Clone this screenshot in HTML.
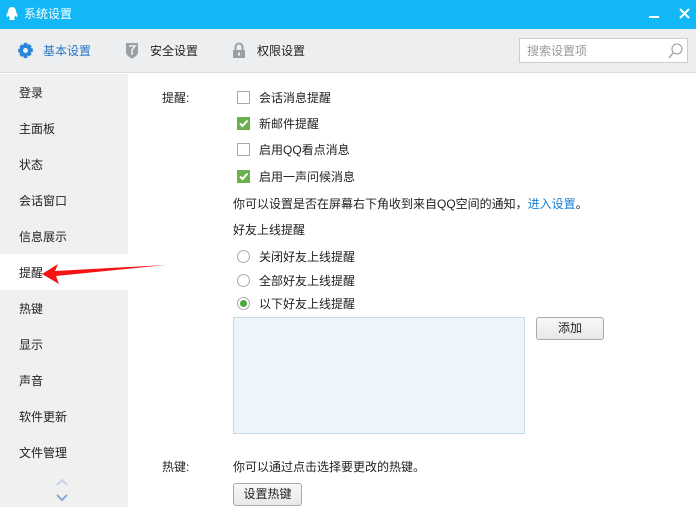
<!DOCTYPE html>
<html><head><meta charset="utf-8"><style>
*{margin:0;padding:0;box-sizing:border-box}
body{width:696px;height:507px;overflow:hidden;font:12px "Liberation Sans","Noto Sans CJK SC",sans-serif;color:#222;background:#fff;position:relative}
.a{position:absolute;white-space:nowrap;line-height:14px}
.cb{position:absolute;width:13px;height:13px;border:1px solid #aaa;background:#fff}
.cb.on{background:#6ab04c;border-color:#6ab04c}
.rd{position:absolute;width:13px;height:13px;border:1px solid #aaa;border-radius:50%;background:#fff}
.btn{position:absolute;border:1px solid #aaa;border-radius:3px;background:linear-gradient(#f8f8f8,#e8e8e8);text-align:center;line-height:20px}
</style></head><body>
<div style="position:absolute;left:0;top:0;width:696px;height:29px;background:#12b7f5"></div>
<svg class="a" style="left:5px;top:6px" width="14" height="16" viewBox="0 0 14 16"><path d="M7 1C4 1 3 3.5 3 6 1.5 8 1 10 2 11c.5 0 1-1 1.5-1.5.3 1 1 2 1.8 2.5C4 12.5 3.5 13.5 5 14h4c1.5-.5 1-1.5-.3-2 .8-.5 1.5-1.5 1.8-2.5.5.5 1 1.5 1.5 1.5 1-1 .5-3-1-5 0-2.5-1-5-4-5z" fill="#fff"/></svg>
<div class="a" style="left:24px;top:7px;color:#fff">系统设置</div>
<div style="position:absolute;left:649px;top:16px;width:10px;height:2px;background:#fff"></div>
<svg class="a" style="left:679px;top:8px" width="11" height="11" viewBox="0 0 11 11"><path d="M1 1l9 9M10 1 1 10" stroke="#fff" stroke-width="2"/></svg>
<div style="position:absolute;left:0;top:29px;width:696px;height:44px;background:#eceeef;border-bottom:1px solid #dcdcdc"></div>
<svg class="a" style="left:17px;top:42px" width="17" height="17" viewBox="0 0 20 20"><path d="M8 1h4l.5 2.5 2-1.2 2.8 2.8-1.2 2 2.5.5v4l-2.5.5 1.2 2-2.8 2.8-2-1.2L12 19H8l-.5-2.5-2 1.2-2.8-2.8 1.2-2L1.5 12V8l2.5-.5-1.2-2 2.8-2.8 2 1.2z" fill="#2a84d8"/><circle cx="10" cy="10" r="3" fill="#eceeef"/></svg>
<div class="a" style="left:43px;top:44px;color:#2a76c6">基本设置</div>
<svg class="a" style="left:125px;top:42px" width="14" height="17" viewBox="0 0 14 17"><path d="M1 1h12v9c0 3-3 5-6 6.5C4 15 1 13 1 10z" fill="#9a9fa5"/><path d="M4 4h6L7 8v5" stroke="#eceeef" stroke-width="1.6" fill="none"/></svg>
<div class="a" style="left:150px;top:44px">安全设置</div>
<svg class="a" style="left:232px;top:42px" width="14" height="17" viewBox="0 0 14 17"><path d="M3.5 8V5a3.5 3.5 0 0 1 7 0v3" stroke="#9a9fa5" stroke-width="2" fill="none"/><rect x="1" y="8" width="12" height="8" fill="#9a9fa5"/><rect x="6" y="10.5" width="2" height="3" fill="#eceeef"/></svg>
<div class="a" style="left:257px;top:44px">权限设置</div>
<div style="position:absolute;left:519px;top:38px;width:169px;height:25px;background:#fff;border:1px solid #ccc"></div>
<div class="a" style="left:527px;top:44px;color:#999">搜索设置项</div>
<svg class="a" style="left:667px;top:42px" width="17" height="18" viewBox="0 0 17 18"><circle cx="10" cy="7" r="5" stroke="#aaa" stroke-width="1.3" fill="none"/><path d="M6.5 10.5 2 16" stroke="#aaa" stroke-width="1.6"/></svg>
<div style="position:absolute;left:0;top:74px;width:128px;height:433px;background:#f0f0f0"></div>
<div style="position:absolute;left:0;top:254px;width:128px;height:36px;background:#fff"></div>
<div class="a" style="left:19px;top:86px">登录</div>
<div class="a" style="left:19px;top:122px">主面板</div>
<div class="a" style="left:19px;top:158px">状态</div>
<div class="a" style="left:19px;top:194px">会话窗口</div>
<div class="a" style="left:19px;top:230px">信息展示</div>
<div class="a" style="left:19px;top:266px">提醒</div>
<div class="a" style="left:19px;top:302px">热键</div>
<div class="a" style="left:19px;top:338px">显示</div>
<div class="a" style="left:19px;top:374px">声音</div>
<div class="a" style="left:19px;top:410px">软件更新</div>
<div class="a" style="left:19px;top:446px">文件管理</div>
<svg class="a" style="left:56px;top:477px" width="12" height="26" viewBox="0 0 12 26"><path d="M1 8 6 3l5 5" stroke="#c5d3e5" stroke-width="2" fill="none"/><path d="M1 18l5 5 5-5" stroke="#8aaad0" stroke-width="2" fill="none"/></svg>
<svg class="a" style="left:40px;top:262px" width="128" height="24" viewBox="0 0 128 24"><path d="M2 12 18 2l-3 7L126 3 16 14l3 8z" fill="#f41414"/></svg>
<div class="a" style="left:162px;top:91px">提醒:</div>
<div class="cb" style="left:237px;top:91px"></div><div class="a" style="left:259px;top:91px">会话消息提醒</div>
<div class="cb on" style="left:237px;top:117px"><svg width="11" height="11" viewBox="0 0 11 11" style="display:block"><path d="M2 5.5 4.5 8 9.5 2.5" stroke="#fff" stroke-width="2" fill="none"/></svg></div><div class="a" style="left:259px;top:117px">新邮件提醒</div>
<div class="cb" style="left:237px;top:143px"></div><div class="a" style="left:259px;top:143px">启用QQ看点消息</div>
<div class="cb on" style="left:237px;top:170px"><svg width="11" height="11" viewBox="0 0 11 11" style="display:block"><path d="M2 5.5 4.5 8 9.5 2.5" stroke="#fff" stroke-width="2" fill="none"/></svg></div><div class="a" style="left:259px;top:170px">启用一声问候消息</div>
<div class="a" style="left:233px;top:197px">你可以设置是否在屏幕右下角收到来自QQ空间的通知，<span style="color:#1a7fd4">进入设置</span>。</div>
<div class="a" style="left:233px;top:223px">好友上线提醒</div>
<div class="rd" style="left:237px;top:250px"></div><div class="a" style="left:259px;top:250px">关闭好友上线提醒</div>
<div class="rd" style="left:237px;top:274px"></div><div class="a" style="left:259px;top:274px">全部好友上线提醒</div>
<div class="rd" style="left:237px;top:297px"><div style="position:absolute;left:2px;top:2px;width:7px;height:7px;border-radius:50%;background:#4aa83c"></div></div><div class="a" style="left:259px;top:297px">以下好友上线提醒</div>
<div style="position:absolute;left:233px;top:317px;width:292px;height:117px;background:#ebf5fb;border:1px solid #c6dbe8"></div>
<div class="btn" style="left:536px;top:317px;width:68px;height:23px">添加</div>
<div class="a" style="left:162px;top:460px">热键:</div>
<div class="a" style="left:233px;top:460px">你可以通过点击选择要更改的热键。</div>
<div class="btn" style="left:233px;top:483px;width:69px;height:23px">设置热键</div>
</body></html>
